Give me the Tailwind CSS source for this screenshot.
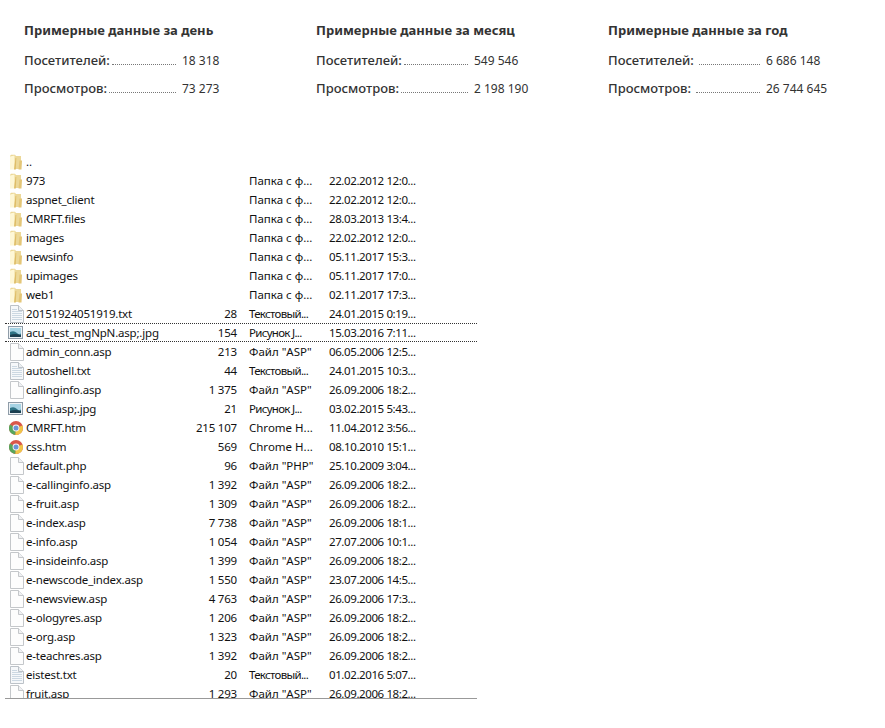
<!DOCTYPE html>
<html lang="en">

<head>
    <meta charset="UTF-8">
    <meta name="viewport" content="width=device-width, initial-scale=1.0">
    <title>Примерные данные</title>
    <script src="https://cdn.jsdelivr.net/npm/@tailwindcss/browser@4"></script>
</head>

<body class="bg-white h-[728px] overflow-hidden font-['Noto_Sans',sans-serif]">

    <!-- icons -->
    <svg class="hidden">
        <defs>
            <linearGradient id="folderFront" x1="0" x2="1" y1="0" y2="0">
                <stop offset="0" stop-color="#fdf3c8" />
                <stop offset="1" stop-color="#efd58a" />
            </linearGradient>
        </defs>
        <symbol id="folder" viewBox="0 0 14 16">
            <path d="M1 2 L2 .8 H6 L7 2 H12 V15 H1 Z" fill="#ecd898" />
            <path d="M1 2.5 L5.5 1.5 V15.5 H1 Z" fill="#fef7d6" />
            <path d="M5 15.5 L6.5 4 H12.5 L13 6 L12.5 15 Z" fill="url(#folderFront)" />
            <path d="M5 15.5 L6.5 4 L7.3 4 L6.8 15.5 Z" fill="#dfbd68" />
            <path d="M9.5 15.5 H12.5 L13 6.5 H10.5 Z" fill="#e4c677" />
        </symbol>
        <symbol id="blank" viewBox="0 0 14 18">
            <path d="M.5 .5 H8.5 L13.5 5.5 V17.5 H.5 Z" fill="#fdfdfd" stroke="#c4c7ca" />
            <path d="M8.5 .5 V5.5 H13.5" fill="#f0f1f3" stroke="#c4c7ca" />
        </symbol>
        <symbol id="text" viewBox="0 0 14 18">
            <path d="M.5 .5 H8.5 L13.5 5.5 V17.5 H.5 Z" fill="#f6f8fa" stroke="#bcc2c8" />
            <path d="M8.5 .5 V5.5 H13.5" fill="#eceff2" stroke="#bcc2c8" />
            <path d="M2 4.5 H7 M2 6.5 H12 M2 8.5 H12 M2 10.5 H12 M2 12.5 H12 M2 14.5 H12" stroke="#ccd8e2" />
        </symbol>
        <symbol id="picture" viewBox="0 0 15 13">
            <rect x=".5" y=".5" width="14" height="12" fill="#eef2f5" stroke="#8f9ca8" />
            <rect x="2" y="2" width="11" height="9" fill="#a6d3e4" />
            <path d="M2 6 Q6 4 9 7 T13 7 V11 H2 Z" fill="#2f7486" />
            <path d="M2 9 Q7 7 13 9 V11 H2 Z" fill="#1b3f50" />
        </symbol>
        <symbol id="chrome" viewBox="0 0 14 14">
            <circle cx="7" cy="7" r="7" fill="#d9574a" />
            <path d="M7 7 L1 3.4 A7 7 0 0 0 6.4 14 Z" fill="#57a65c" />
            <path d="M7 7 L13.4 4.4 A7 7 0 0 1 6.4 14 Z" fill="#f0c648" />
            <circle cx="7" cy="7" r="3.4" fill="#f4f4f4" />
            <circle cx="7" cy="7" r="2.5" fill="#6a94d6" />
        </symbol>
    </svg>

    <!-- Stats -->
    <div class="flex pl-6 pt-[21px] text-[#333] text-[13px]">
        <div class="w-[292px]">
            <h2 class="font-bold leading-[19px]">Примерные данные за день</h2>
            <div class="flex items-baseline mt-[11px] leading-[18px]">
                <div class="flex items-baseline w-[152px]">
                    <span class="font-medium">Посетителей:</span>
                    <span class="flex-1 ml-[2px] border-b border-dotted border-[#777]"></span>
                </div>
                <span class="pl-[6px] text-xs">18 318</span>
            </div>
            <div class="flex items-baseline mt-[10px] leading-[18px]">
                <div class="flex items-baseline w-[152px]">
                    <span class="font-medium">Просмотров:</span>
                    <span class="flex-1 ml-[2px] border-b border-dotted border-[#777]"></span>
                </div>
                <span class="pl-[6px] text-xs">73 273</span>
            </div>
        </div>
        <div class="w-[292px]">
            <h2 class="font-bold leading-[19px]">Примерные данные за месяц</h2>
            <div class="flex items-baseline mt-[11px] leading-[18px]">
                <div class="flex items-baseline w-[152px]">
                    <span class="font-medium">Посетителей:</span>
                    <span class="flex-1 ml-[2px] border-b border-dotted border-[#777]"></span>
                </div>
                <span class="pl-[6px] text-xs">549 546</span>
            </div>
            <div class="flex items-baseline mt-[10px] leading-[18px]">
                <div class="flex items-baseline w-[152px]">
                    <span class="font-medium">Просмотров:</span>
                    <span class="flex-1 ml-[2px] border-b border-dotted border-[#777]"></span>
                </div>
                <span class="pl-[6px] text-xs">2 198 190</span>
            </div>
        </div>
        <div class="w-[253px]">
            <h2 class="font-bold leading-[19px]">Примерные данные за год</h2>
            <div class="flex items-baseline mt-[11px] leading-[18px]">
                <div class="flex items-baseline w-[152px]">
                    <span class="font-medium">Посетителей:</span>
                    <span class="flex-1 ml-[5px] border-b border-dotted border-[#777]"></span>
                </div>
                <span class="pl-[6px] text-xs">6 686 148</span>
            </div>
            <div class="flex items-baseline mt-[10px] leading-[18px]">
                <div class="flex items-baseline w-[152px]">
                    <span class="font-medium">Просмотров:</span>
                    <span class="flex-1 ml-[5px] border-b border-dotted border-[#777]"></span>
                </div>
                <span class="pl-[6px] text-xs">26 744 645</span>
            </div>
        </div>
    </div>

    <div id="list" class="w-[472px] ml-[5px] h-[547px] mt-[55px] overflow-hidden border-b border-[#999] text-[11.5px] text-[#111]"></div>

    <script>
        const files = [
            ['folder', '..', '', '', ''],
            ['folder', '973', '', 'Папка с ф...', '22.02.2012 12:0...'],
            ['folder', 'aspnet_client', '', 'Папка с ф...', '22.02.2012 12:0...'],
            ['folder', 'CMRFT.files', '', 'Папка с ф...', '28.03.2013 13:4...'],
            ['folder', 'images', '', 'Папка с ф...', '22.02.2012 12:0...'],
            ['folder', 'newsinfo', '', 'Папка с ф...', '05.11.2017 15:3...'],
            ['folder', 'upimages', '', 'Папка с ф...', '05.11.2017 17:0...'],
            ['folder', 'web1', '', 'Папка с ф...', '02.11.2017 17:3...'],
            ['text', '20151924051919.txt', '28', 'Текстовый...', '24.01.2015 0:19...'],
            ['picture', 'acu_test_mgNpN.asp;.jpg', '154', 'Рисунок J...', '15.03.2016 7:11...'],
            ['blank', 'admin_conn.asp', '213', 'Файл "ASP"', '06.05.2006 12:5...'],
            ['text', 'autoshell.txt', '44', 'Текстовый...', '24.01.2015 10:3...'],
            ['blank', 'callinginfo.asp', '1 375', 'Файл "ASP"', '26.09.2006 18:2...'],
            ['picture', 'ceshi.asp;.jpg', '21', 'Рисунок J...', '03.02.2015 5:43...'],
            ['chrome', 'CMRFT.htm', '215 107', 'Chrome H...', '11.04.2012 3:56...'],
            ['chrome', 'css.htm', '569', 'Chrome H...', '08.10.2010 15:1...'],
            ['blank', 'default.php', '96', 'Файл "PHP"', '25.10.2009 3:04...'],
            ['blank', 'e-callinginfo.asp', '1 392', 'Файл "ASP"', '26.09.2006 18:2...'],
            ['blank', 'e-fruit.asp', '1 309', 'Файл "ASP"', '26.09.2006 18:2...'],
            ['blank', 'e-index.asp', '7 738', 'Файл "ASP"', '26.09.2006 18:1...'],
            ['blank', 'e-info.asp', '1 054', 'Файл "ASP"', '27.07.2006 10:1...'],
            ['blank', 'e-insideinfo.asp', '1 399', 'Файл "ASP"', '26.09.2006 18:2...'],
            ['blank', 'e-newscode_index.asp', '1 550', 'Файл "ASP"', '23.07.2006 14:5...'],
            ['blank', 'e-newsview.asp', '4 763', 'Файл "ASP"', '26.09.2006 17:3...'],
            ['blank', 'e-ologyres.asp', '1 206', 'Файл "ASP"', '26.09.2006 18:2...'],
            ['blank', 'e-org.asp', '1 323', 'Файл "ASP"', '26.09.2006 18:2...'],
            ['blank', 'e-teachres.asp', '1 392', 'Файл "ASP"', '26.09.2006 18:2...'],
            ['text', 'eistest.txt', '20', 'Текстовый...', '01.02.2016 5:07...'],
            ['blank', 'fruit.asp', '1 293', 'Файл "ASP"', '26.09.2006 18:2...'],
        ];

        // icon box inside the 18px slot
        const icons = {
            folder: 'w-[14px] h-4 ml-[4px] mr-[3px]',
            blank: 'w-[14px] h-[18px] ml-[5px] mr-[2px]',
            text: 'w-[14px] h-[18px] ml-[5px] mr-[2px]',
            picture: 'w-[15px] h-[13px] ml-[3px] mr-[3px]',
            chrome: 'w-[14px] h-[14px] ml-[4px] mr-[3px]',
        };

        const list = document.getElementById('list');
        list.innerHTML = files.map(([icon, name, size, type, date]) => {
            const focus = name.startsWith('acu_test') ? 'border-y border-dotted border-[#333]' : '';
            const narrow = type.startsWith('Текст') || type.startsWith('Рисунок') ? 'tracking-[-0.7px]' : '';
            return `<div class="flex items-center h-[19px] ${focus}">
                <svg class="${icons[icon]} shrink-0"><use href="#${icon}"></use></svg>
                <span class="w-[120px] whitespace-nowrap tracking-[-0.2px]">${name}</span>
                <span class="w-[91px] text-right tracking-[-0.2px]">${size}</span>
                <span class="w-[80px] ml-[12px] whitespace-nowrap ${narrow}">${type}</span>
                <span class="whitespace-nowrap tracking-[-0.4px]">${date}</span>
            </div>`;
        }).join('');
    </script>

</body>

</html>
